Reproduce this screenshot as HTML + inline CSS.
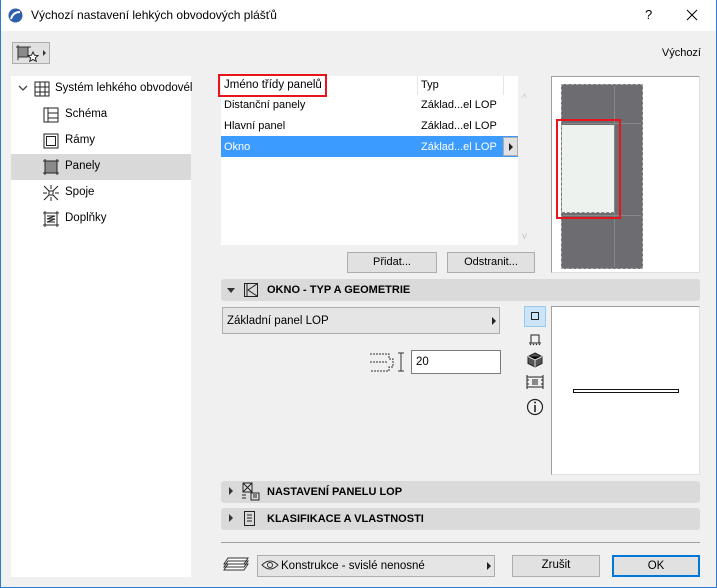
<!DOCTYPE html>
<html><head><meta charset="utf-8"><style>
*{margin:0;padding:0;box-sizing:border-box}
body{width:717px;height:588px;overflow:hidden;background:#f0f0f0;font-family:"Liberation Sans",sans-serif;font-size:11px;color:#000;position:relative}
.a{position:absolute}
.btn{position:absolute;background:#e1e1e1;border:1px solid #adadad;text-align:center;line-height:19px;font-size:11px}
.sec{position:absolute;left:221px;width:479px;height:22px;background:#dadada;border-radius:3px;font-weight:bold;font-size:11px;line-height:22px}
.sec .t{position:absolute;left:46px}
.tri{position:absolute;width:0;height:0}
</style></head><body>
<div class="a" style="left:0;top:0;width:717px;height:588px;border:1px solid #2a7ad0;border-top:none"></div>
<div class="a" style="left:1px;top:0;width:715px;height:31px;background:#fff"></div>
<svg class="a" style="left:8px;top:8px" width="15" height="15"><circle cx="7.5" cy="7.5" r="7" fill="#2f5fa8"/><path d="M3 11 Q5 4 12 4" stroke="#fff" stroke-width="2" fill="none"/></svg>
<div class="a" style="left:31px;top:8px;font-size:12px">Výchozí nastavení lehkých obvodových plášťů</div>
<div class="a" style="left:645px;top:7px;font-size:13px">?</div>
<svg class="a" style="left:686px;top:9px" width="12" height="12"><path d="M1 1L11 11M11 1L1 11" stroke="#000" stroke-width="1"/></svg>
<div class="a" style="left:12px;top:42px;width:38px;height:22px;background:#e1e1e1;border:1px solid #adadad"></div>
<svg class="a" style="left:15px;top:44px" width="34" height="20"><rect x="3" y="3" width="10" height="10" fill="#8a8a8a" stroke="#333"/><path d="M1 3H16M3 1V16" stroke="#333"/><path d="M18 8l1.5 3.2 3.5.4-2.6 2.3.8 3.4-3.2-1.8-3.2 1.8.8-3.4-2.6-2.3 3.5-.4z" fill="#fff" stroke="#222"/><path d="M28 6l3 3-3 3z" fill="#333"/></svg>
<div class="a" style="right:16px;top:47px;font-size:11px">Výchozí</div>
<!-- left tree -->
<div class="a" style="left:11px;top:76px;width:180px;height:501px;background:#fff"></div>
<div class="a" style="left:11px;top:154px;width:180px;height:26px;background:#d9d9d9"></div>
<svg class="a" style="left:18px;top:83px" width="12" height="10"><path d="M1 3l4 4 4-4" stroke="#444" fill="none" stroke-width="1.3"/></svg>
<svg class="a" style="left:33px;top:80px" width="18" height="18"><rect x="2" y="2" width="14" height="14" fill="none" stroke="#222"/><path d="M2 7H16M2 12H16M7 2V16M12 2V16" stroke="#222"/></svg>
<div class="a" style="left:55px;top:82px;font-size:11.5px">Systém lehkého obvodovél</div>
<svg class="a" style="left:42px;top:106px" width="18" height="18"><rect x="2" y="2" width="14" height="14" fill="none" stroke="#222"/><path d="M6 2V16M6 7H16M6 12H16" stroke="#222"/></svg>
<div class="a" style="left:65px;top:108px;font-size:11.5px">Schéma</div>
<svg class="a" style="left:42px;top:132px" width="18" height="18"><rect x="2" y="2" width="14" height="14" fill="none" stroke="#222"/><rect x="4.5" y="4.5" width="9" height="9" fill="none" stroke="#222"/></svg>
<div class="a" style="left:65px;top:134px;font-size:11.5px">Rámy</div>
<svg class="a" style="left:42px;top:158px" width="18" height="18"><rect x="3" y="3" width="12" height="12" fill="#8a8a8a" stroke="#222"/><path d="M1 3H17M1 15H17M3 1V17M15 1V17" stroke="#222"/></svg>
<div class="a" style="left:65px;top:160px;font-size:11.5px">Panely</div>
<svg class="a" style="left:42px;top:184px" width="18" height="18"><rect x="7" y="7" width="4" height="4" fill="none" stroke="#222"/><path d="M2 2L7 7M16 2L11 7M2 16L7 11M16 16L11 11M9 1V5M1 9H5M17 9H13M9 17V13" stroke="#222"/></svg>
<div class="a" style="left:65px;top:186px;font-size:11.5px">Spoje</div>
<svg class="a" style="left:42px;top:210px" width="18" height="18"><path d="M1 3H17M1 15H17M3 1V17M15 1V17M5 6H13L5 9H13L5 12H13" stroke="#222" fill="none"/></svg>
<div class="a" style="left:65px;top:212px;font-size:11.5px">Doplňky</div>
<!-- list -->
<div class="a" style="left:221px;top:76px;width:297px;height:169px;background:#fff"></div>
<div class="a" style="left:417px;top:76px;width:1px;height:19px;background:#e5e5e5"></div>
<div class="a" style="left:503px;top:76px;width:1px;height:19px;background:#e5e5e5"></div>
<div class="a" style="left:218px;top:74px;width:109px;height:23px;border:2px solid #e8141b"></div>
<div class="a" style="left:224px;top:79px;font-size:11.5px">Jméno třídy panelů</div>
<div class="a" style="left:421px;top:79px;font-size:11px">Typ</div>
<div class="a" style="left:224px;top:99px;font-size:11px">Distanční panely</div>
<div class="a" style="left:421px;top:99px;font-size:11px">Základ...el LOP</div>
<div class="a" style="left:224px;top:120px;font-size:11px">Hlavní panel</div>
<div class="a" style="left:421px;top:120px;font-size:11px">Základ...el LOP</div>
<div class="a" style="left:221px;top:136px;width:297px;height:21px;background:#3c9bff"></div>
<div class="a" style="left:224px;top:141px;font-size:11px;color:#fff">Okno</div>
<div class="a" style="left:421px;top:141px;font-size:11px;color:#fff">Základ...el LOP</div>
<div class="a" style="left:503px;top:137px;width:15px;height:19px;background:#e1e1e1;border:1px solid #adadad"></div>
<div class="tri" style="left:509px;top:143px;border-left:4px solid #222;border-top:4px solid transparent;border-bottom:4px solid transparent"></div>
<div class="a" style="left:522px;top:93px;color:#c8c8c8;font-size:10px">^</div>
<div class="a" style="left:522px;top:231px;color:#c8c8c8;font-size:10px">v</div>
<div class="btn" style="left:347px;top:252px;width:90px;height:21px">Přidat...</div>
<div class="btn" style="left:447px;top:252px;width:88px;height:21px">Odstranit...</div>
<!-- preview top -->
<div class="a" style="left:551px;top:76px;width:149px;height:197px;background:#fff;border:1px solid #a0a0a0;border-right-color:#e0e0e0;border-bottom-color:#e0e0e0"></div>
<div class="a" style="left:561px;top:84px;width:82px;height:185px;background:#6d6d71;border:1px dashed #aaa"></div>
<div class="a" style="left:614px;top:86px;width:1px;height:181px;background:#888"></div>
<div class="a" style="left:563px;top:123px;width:78px;height:1px;background:#888"></div>
<div class="a" style="left:563px;top:215px;width:78px;height:1px;background:#888"></div>
<div class="a" style="left:562px;top:125px;width:52px;height:88px;background:#eef2ef;border-bottom:1px dashed #888"></div>
<div class="a" style="left:556px;top:119px;width:65px;height:100px;border:2px solid #e8141b"></div>
<!-- section 1 -->
<div class="sec" style="top:279px"><div class="t">OKNO - TYP A GEOMETRIE</div></div>
<div class="tri" style="left:227px;top:288px;border-top:5px solid #333;border-left:4px solid transparent;border-right:4px solid transparent"></div>
<svg class="a" style="left:243px;top:282px" width="16" height="16"><rect x="1.5" y="1.5" width="13" height="13" fill="none" stroke="#222"/><path d="M4 2V14M14 2L5 8L14 14" stroke="#222" fill="none"/></svg>
<div class="a" style="left:222px;top:307px;width:278px;height:27px;background:#e5e5e5;border:1px solid #adadad"></div>
<div class="a" style="left:227px;top:315px;font-size:11.5px">Základní panel LOP</div>
<div class="tri" style="left:492px;top:317px;border-left:4px solid #222;border-top:4px solid transparent;border-bottom:4px solid transparent"></div>
<svg class="a" style="left:369px;top:351px" width="36" height="22"><path d="M1 3H20V8H24V16H20V20H1M1 11H18" stroke="#333" fill="none" stroke-dasharray="2 1"/><path d="M32 2V20M29 2H35M29 20H35" stroke="#333"/></svg>
<div class="a" style="left:411px;top:350px;width:90px;height:24px;background:#fff;border:1px solid #7a7a7a"></div>
<div class="a" style="left:416px;top:356px;font-size:11.5px">20</div>
<div class="a" style="left:524px;top:306px;width:22px;height:21px;background:#cce4f7;border:1px solid #99c9ef"></div>
<div class="a" style="left:531px;top:312px;width:8px;height:8px;border:1.3px solid #222"></div>
<svg class="a" style="left:527px;top:332px" width="16" height="15"><path d="M4 11V3H12V11M2 11H14" stroke="#222" fill="none"/><path d="M3 13L4 12M6 13L7 12M9 13L10 12M12 13L13 12" stroke="#222"/></svg>
<svg class="a" style="left:527px;top:352px" width="16" height="16"><path d="M8 1L15 4.5V11.5L8 15L1 11.5V4.5Z" fill="#555" stroke="#222"/><path d="M1 4.5L8 8L15 4.5M8 8V15" stroke="#ddd"/></svg>
<svg class="a" style="left:526px;top:374px" width="18" height="16"><path d="M1 1V15M17 1V15M1 3H17M1 13H17M1 6H3M1 10H3M15 6H17M15 10H17M6 6H12M6 8H12M6 10H12" stroke="#222" fill="none"/></svg>
<svg class="a" style="left:526px;top:398px" width="18" height="18"><circle cx="9" cy="9" r="7.5" fill="none" stroke="#222" stroke-width="1.2"/><path d="M9 7V14" stroke="#222" stroke-width="1.6"/><circle cx="9" cy="4.5" r="1" fill="#222"/></svg>
<div class="a" style="left:551px;top:306px;width:149px;height:169px;background:#fff;border:1px solid #a0a0a0;border-right-color:#e0e0e0;border-bottom-color:#e0e0e0"></div>
<div class="a" style="left:573px;top:389px;width:106px;height:4px;border:1px solid #111;background:#fff"></div>
<!-- sections -->
<div class="sec" style="top:481px"><div class="t">NASTAVENÍ PANELU LOP</div></div>
<div class="tri" style="left:229px;top:487px;border-left:4px solid #333;border-top:4px solid transparent;border-bottom:4px solid transparent"></div>
<svg class="a" style="left:241px;top:482px" width="20" height="20"><rect x="2" y="1" width="9" height="9" fill="none" stroke="#222"/><path d="M2 1L11 10M11 1L2 10" stroke="#222"/><rect x="10" y="11" width="8" height="7" fill="none" stroke="#222"/><path d="M12 13H16M12 15H16M1 13H5M1 16H5" stroke="#222"/></svg>
<div class="sec" style="top:508px"><div class="t">KLASIFIKACE A VLASTNOSTI</div></div>
<div class="tri" style="left:229px;top:514px;border-left:4px solid #333;border-top:4px solid transparent;border-bottom:4px solid transparent"></div>
<svg class="a" style="left:243px;top:510px" width="14" height="18"><rect x="1.5" y="1.5" width="10" height="14" fill="none" stroke="#222"/><path d="M4 5H9M4 8H9M4 11H9" stroke="#222"/></svg>
<div class="a" style="left:221px;top:542px;width:479px;height:1px;background:#a0a0a0"></div>
<!-- bottom -->
<svg class="a" style="left:222px;top:556px" width="28" height="17"><path d="M6 2H26L22 8H2Z M6 5H26L22 11H2Z M6 8H26L22 14H2Z" fill="#fff" stroke="#333"/></svg>
<div class="a" style="left:257px;top:555px;width:238px;height:22px;background:#e5e5e5;border:1px solid #adadad"></div>
<svg class="a" style="left:261px;top:559px" width="18" height="12"><path d="M1 6Q9 -2 17 6Q9 14 1 6Z" fill="none" stroke="#333"/><circle cx="9" cy="6" r="2.5" fill="none" stroke="#333"/></svg>
<div class="a" style="left:281px;top:560px;font-size:11.5px">Konstrukce - svislé nenosné</div>
<div class="tri" style="left:487px;top:562px;border-left:4px solid #222;border-top:4px solid transparent;border-bottom:4px solid transparent"></div>
<div class="btn" style="left:512px;top:555px;width:88px;height:22px;font-size:11.5px">Zrušit</div>
<div class="btn" style="left:612px;top:555px;width:88px;height:22px;border:2px solid #0078d7;line-height:18px;font-size:11.5px">OK</div>
</body></html>
